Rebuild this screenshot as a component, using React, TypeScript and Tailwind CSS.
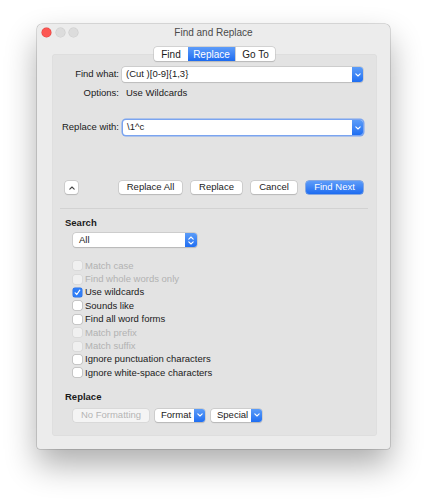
import React from "react";

const font = { fontFamily: '"Liberation Sans", Arial, sans-serif' };

function Chevron({ dir = "down" }: { dir?: "down" | "up" }) {
  return (
    <svg width="6" height="4" viewBox="0 0 6 4" className={dir === "up" ? "rotate-180" : ""}>
      <path d="M0.8 0.8 L3 3 L5.2 0.8" fill="none" stroke="currentColor" strokeWidth="1.1" strokeLinecap="round" strokeLinejoin="round" />
    </svg>
  );
}

function ComboInput({ value, focused }: { value: string; focused?: boolean }) {
  return (
    <div
      className={
        "flex h-[15px] flex-1 items-stretch rounded-[3px] bg-white " +
        (focused
          ? "shadow-[0_0_0_1.5px_#7aa4f0]"
          : "shadow-[0_0_0_0.5px_#b9b9b9,0_0.5px_1px_rgba(0,0,0,0.15)]")
      }
    >
      <div className="flex flex-1 items-center pl-[4px] text-[9.5px] text-[#1a1a1a]">{value}</div>
      <div className="flex w-[11px] items-center justify-center rounded-r-[3px] bg-gradient-to-b from-[#5b9cf8] to-[#1e6ef2] text-white">
        <Chevron />
      </div>
    </div>
  );
}

function Btn({ label, w, primary, disabled }: { label: string; w: number; primary?: boolean; disabled?: boolean }) {
  return (
    <div
      style={{ width: w }}
      className={
        "flex h-[13px] items-center justify-center rounded-[3px] text-[9.5px] " +
        (primary
          ? "bg-gradient-to-b from-[#5d9cf9] to-[#1c6bf0] text-white shadow-[0_0_0_0.5px_#2a6fe0]"
          : disabled
          ? "bg-[#f4f4f4] text-[#b4b4b4] shadow-[0_0_0_0.5px_#cfcfcf]"
          : "bg-white text-[#1a1a1a] shadow-[0_0_0_0.5px_#bcbcbc,0_0.5px_1px_rgba(0,0,0,0.2)]")
      }
    >
      {label}
    </div>
  );
}

function PopBtn({ label, w }: { label: string; w: number }) {
  return (
    <div
      style={{ width: w }}
      className="flex h-[13px] items-stretch rounded-[3px] bg-white shadow-[0_0_0_0.5px_#bcbcbc,0_0.5px_1px_rgba(0,0,0,0.2)]"
    >
      <div className="flex flex-1 items-center pl-[6px] text-[9.5px] text-[#1a1a1a]">{label}</div>
      <div className="flex w-[11px] items-center justify-center rounded-r-[3px] bg-gradient-to-b from-[#5b9cf8] to-[#1e6ef2] text-white">
        <Chevron />
      </div>
    </div>
  );
}

function Check({ label, checked, disabled }: { label: string; checked?: boolean; disabled?: boolean }) {
  return (
    <div className="flex h-[13.4px] items-center">
      <div
        className={
          "flex h-[9px] w-[9px] items-center justify-center rounded-[2px] " +
          (checked
            ? "bg-[#2f7df6] shadow-[0_0_0_0.5px_#2a6fe0]"
            : disabled
            ? "bg-[#f0f0f0] shadow-[0_0_0_0.5px_#d2d2d2]"
            : "bg-white shadow-[0_0_0_0.5px_#a9a9a9]")
        }
      >
        {checked && (
          <svg width="7" height="7" viewBox="0 0 7 7">
            <path d="M1.2 3.8 L2.8 5.5 L5.8 1.2" fill="none" stroke="white" strokeWidth="1.2" strokeLinecap="round" strokeLinejoin="round" />
          </svg>
        )}
      </div>
      <span className={"ml-[3px] text-[9.5px] " + (disabled ? "text-[#b2b2b2]" : "text-[#1a1a1a]")}>{label}</span>
    </div>
  );
}

function Label({ text }: { text: string }) {
  return (
    <div className="flex w-[54px] justify-end whitespace-nowrap text-[9.5px] text-[#1a1a1a]">{text}</div>
  );
}

export default function App() {
  return (
    <div className="h-[499px] w-[428px] bg-white pl-[37px] pt-[24px]" style={font}>
      <div className="flex h-[425px] w-[353px] flex-col rounded-t-[5px] rounded-b-[3px] bg-[#ececec] shadow-[0_16px_32px_rgba(0,0,0,0.32),0_0_0_0.5px_rgba(0,0,0,0.25)]">
        {/* title bar */}
        <div className="relative flex h-[17px] items-center justify-center">
          <div className="absolute left-[5px] top-[3.5px] flex gap-[4.5px]">
            <div className="h-[9px] w-[9px] rounded-full bg-[#fc5753] shadow-[0_0_0_0.5px_#df3d3a]" />
            <div className="h-[9px] w-[9px] rounded-full bg-[#dcdcdc] shadow-[0_0_0_0.5px_#c8c8c8]" />
            <div className="h-[9px] w-[9px] rounded-full bg-[#dcdcdc] shadow-[0_0_0_0.5px_#c8c8c8]" />
          </div>
          <span className="text-[10px] text-[#4a4a4a]">Find and Replace</span>
        </div>

        {/* tabs */}
        <div className="relative z-10 mt-[6px] flex justify-center pl-[2px]">
          <div className="flex h-[14px] rounded-[3px] bg-white text-[10px] shadow-[0_0_0_0.5px_#bdbdbd,0_0.5px_1px_rgba(0,0,0,0.2)]">
            <div className="flex w-[34px] items-center justify-center text-[#1a1a1a]">Find</div>
            <div className="flex w-[47px] items-center justify-center bg-gradient-to-b from-[#5d9cf9] to-[#1c6bf0] text-white">Replace</div>
            <div className="flex w-[40px] items-center justify-center border-l-[0.5px] border-[#d0d0d0] text-[#1a1a1a]">Go To</div>
          </div>
        </div>

        {/* panel */}
        <div className="ml-[15px] mr-[13px] -mt-[7px] flex flex-col rounded-[4px] bg-[#e3e3e3] pb-[14px] pl-[13px] pr-[14px] pt-[13px] shadow-[inset_0_0_0_0.5px_#dadada]">
          <div className="flex h-[15px] items-center">
            <Label text="Find what:" />
            <div className="ml-[3px] flex flex-1">
              <ComboInput value="(Cut )[0-9]{1,3}" />
            </div>
          </div>
          <div className="mt-[4px] flex h-[14px] items-center">
            <Label text="Options:" />
            <div className="ml-[7px] text-[9.5px] text-[#1a1a1a]">Use Wildcards</div>
          </div>
          <div className="mt-[20px] flex h-[15px] items-center">
            <Label text="Replace with:" />
            <div className="ml-[4px] flex flex-1">
              <ComboInput value="\1^c" focused />
            </div>
          </div>

          <div className="mt-[46px] flex h-[13px] items-center">
            <div className="flex h-[13px] w-[13px] items-center justify-center rounded-[3px] bg-white text-[#444] shadow-[0_0_0_0.5px_#bcbcbc,0_0.5px_1px_rgba(0,0,0,0.2)]">
              <Chevron dir="up" />
            </div>
            <div className="ml-auto flex gap-[9px]">
              <Btn label="Replace All" w={63} />
              <Btn label="Replace" w={51} />
              <Btn label="Cancel" w={46} />
              <Btn label="Find Next" w={57} primary />
            </div>
          </div>

          <div className="-ml-[5px] mr-[-5px] mt-[14px] h-px bg-[#d2d2d2]" />

          <div className="mt-[8px] flex h-[13px] items-center text-[9.5px] font-bold text-[#1a1a1a]">Search</div>
          <div className="ml-[8px] mt-[3px] flex h-[14px] w-[124px] items-stretch rounded-[3px] bg-white shadow-[0_0_0_0.5px_#bcbcbc,0_0.5px_1px_rgba(0,0,0,0.2)]">
            <div className="flex flex-1 items-center pl-[6px] text-[9.5px] text-[#1a1a1a]">All</div>
            <div className="flex w-[12px] flex-col items-center justify-center gap-[1px] rounded-r-[3px] bg-gradient-to-b from-[#5b9cf8] to-[#1e6ef2] text-white">
              <Chevron dir="up" />
              <Chevron />
            </div>
          </div>

          <div className="ml-[8px] mt-[12px] flex flex-col">
            <Check label="Match case" disabled />
            <Check label="Find whole words only" disabled />
            <Check label="Use wildcards" checked />
            <Check label="Sounds like" />
            <Check label="Find all word forms" />
            <Check label="Match prefix" disabled />
            <Check label="Match suffix" disabled />
            <Check label="Ignore punctuation characters" />
            <Check label="Ignore white-space characters" />
          </div>

          <div className="mt-[11px] flex h-[13px] items-center text-[9.5px] font-bold text-[#1a1a1a]">Replace</div>
          <div className="ml-[8px] mt-[5px] flex gap-[6px]">
            <Btn label="No Formatting" w={76} disabled />
            <PopBtn label="Format" w={50} />
            <PopBtn label="Special" w={51} />
          </div>
        </div>
      </div>
    </div>
  );
}
